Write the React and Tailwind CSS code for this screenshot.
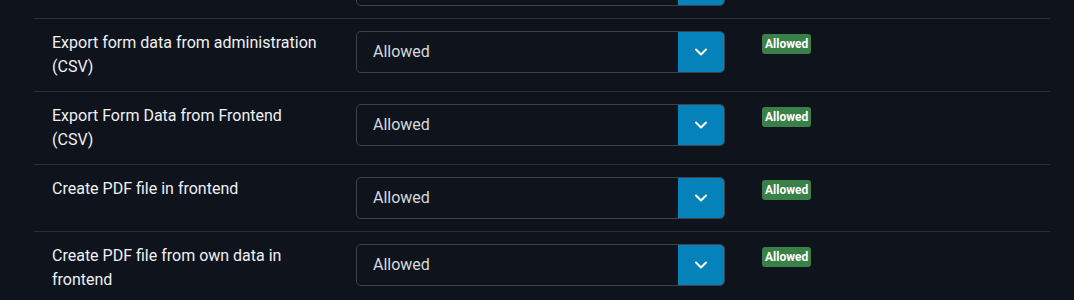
import React from "react";

const rows = [
  "Export form data from administration (CSV)",
  "Export Form Data from Frontend (CSV)",
  "Create PDF file in frontend",
  "Create PDF file from own data in frontend",
];

function Chevron() {
  return (
    <svg width="14" height="14" viewBox="0 0 14 14" fill="none">
      <path d="M2 4.5 L7 9.5 L12 4.5" stroke="#ffffff" strokeWidth="2" strokeLinecap="round" strokeLinejoin="round" />
    </svg>
  );
}

function Row({ label, hidden }) {
  return (
    <div className="flex items-start border-b border-[#2a3039] pt-[12px] pb-[12px]">
      <div className="w-[322px] pl-[18px]">
        <div className={"w-[270px] text-[16px] leading-[24px] text-[#eef0f3] " + (hidden ? "invisible" : "")}>
          {label}
        </div>
      </div>
      <div className="flex h-[42px] w-[369px] overflow-hidden rounded-[5px] border border-[#3b434d]">
        <div className={"flex flex-1 items-center pl-[16px] text-[16px] text-[#d5d9de] " + (hidden ? "invisible" : "")}>Allowed</div>
        <div className="flex w-[46px] items-center justify-center bg-[#0582ba]">
          <Chevron />
        </div>
      </div>
      <div className={"ml-[37px] mt-[3px] flex h-[20px] items-center rounded-[3px] bg-[#3a8049] px-[3px] text-[12px] font-bold text-white " + (hidden ? "invisible" : "")}>
        Allowed
      </div>
    </div>
  );
}

export default function App() {
  return (
    <div className="h-[300px] w-[1074px] overflow-hidden bg-[#0f141c]" style={{ fontFamily: "Roboto, 'Noto Sans', sans-serif" }}>
      <div className="-mt-[48px] ml-[34px] w-[1016px]">
        <Row label="Previous setting" hidden />
        {rows.map((r) => (
          <Row key={r} label={r} />
        ))}
      </div>
    </div>
  );
}
